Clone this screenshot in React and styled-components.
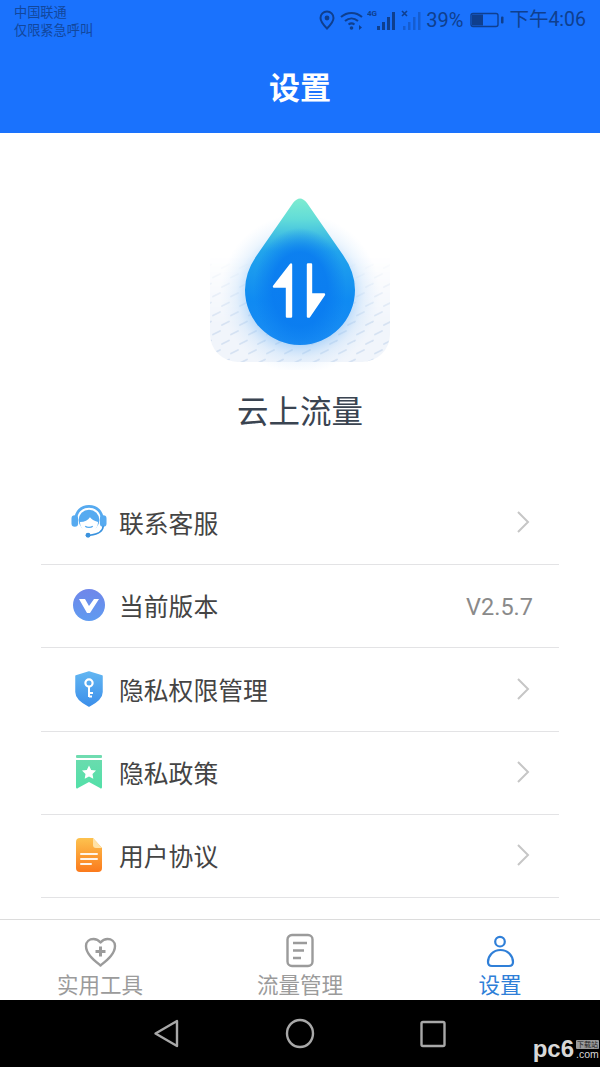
import React from 'react';
import styled, { createGlobalStyle } from 'styled-components';

const CJK = `"Noto Sans CJK SC", "Noto Sans", sans-serif`;

const Global = createGlobalStyle`
  html, body { margin: 0; padding: 0; background: #fff; }
  * { box-sizing: border-box; }
`;

const Page = styled.div`
  width: 600px;
  height: 1067px;
  display: flex;
  flex-direction: column;
  overflow: hidden;
  font-family: ${CJK};
  background: #fff;
`;

/* 상단 헤더 */
const Header = styled.header`
  height: 133px;
  flex: none;
  background: #1a72fd;
  display: flex;
  flex-direction: column;
`;
const StatusBar = styled.div`
  height: 43px;
  padding: 3px 14px 0;
  display: flex;
  justify-content: space-between;
  color: #0f3f8e;
`;
const Carrier = styled.div`
  font-size: 13.2px;
  line-height: 18px;
  color: #12479c;
`;
const StatusRight = styled.div`
  display: flex;
  align-items: center;
  height: 34px;
`;
const StatusText = styled.span`
  font-family: Roboto, sans-serif;
  font-size: ${p => p.$size || 20}px;
  line-height: 34px;
  margin-left: ${p => p.$left || 0}px;
  color: #0f3f8e;
`;
const TimeText = styled(StatusText)`
  font-family: Roboto, ${CJK};
`;
const Title = styled.h1`
  margin: 0;
  height: 90px;
  text-align: center;
  font-size: 31px;
  line-height: 86px;
  font-weight: 700;
  color: #fff;
`;

/* 로고 영역 */
const Main = styled.main`
  flex: 1;
  display: flex;
  flex-direction: column;
  align-items: center;
`;
const Brand = styled.section`
  height: 348.8px;
  flex: none;
  width: 100%;
  padding-top: 47px;
  display: flex;
  flex-direction: column;
  align-items: center;
`;
const LogoSvg = styled.svg`
  width: 220px;
  height: 190px;
  display: block;
`;
const BrandName = styled.div`
  margin-top: 16px;
  font-size: 31.5px;
  line-height: 46px;
  color: #3a4451;
`;

const List = styled.ul`
  list-style: none;
  margin: 0;
  padding: 0;
  width: 518px;
`;
const Row = styled.li`
  height: 83.3px;
  padding: 0 26px 2px 30px;
  display: flex;
  align-items: center;
  border-bottom: 1px solid #e3e3e5;
`;
const RowIcon = styled.svg`
  width: 36px;
  height: 36px;
  flex: none;
  margin-right: 12px;
`;
const RowLabel = styled.span`
  flex: 1;
  font-size: 24.8px;
  color: #444;
`;
const Version = styled.span`
  font-family: Roboto, sans-serif;
  font-size: 23.5px;
  line-height: 28px;
  padding-top: 3px;
  color: #8a8a8a;
`;
const Chevron = styled.svg`
  width: 14px;
  height: 24px;
  margin-right: 3px;
`;

/* 하단 탭 */
const TabBar = styled.nav`
  height: 81px;
  flex: none;
  border-top: 1px solid #dcdcdc;
  display: grid;
  grid-template-columns: repeat(3, 1fr);
  background: #fff;
`;
const Tab = styled.div`
  display: flex;
  flex-direction: column;
  align-items: center;
  padding-top: 13px;
  color: ${p => (p.$active ? '#2f7fd8' : '#9b9b9b')};
`;
const TabIcon = styled.svg`
  width: 36px;
  height: 36px;
  display: block;
`;
const TabLabel = styled.span`
  font-size: 21.5px;
  line-height: 28px;
  margin-top: 1px;
`;

const NavBar = styled.div`
  position: relative;
  height: 67px;
  flex: none;
  background: #000;
`;
const NavIcons = styled.svg`
  width: 600px;
  height: 67px;
  display: block;
`;
const Watermark = styled.div`
  position: absolute;
  right: 1px;
  bottom: 7px;
  display: flex;
  align-items: flex-end;
  color: #d8d8d8;
`;
const WmLogo = styled.span`
  font-family: "Liberation Sans", sans-serif;
  font-weight: 700;
  font-size: 24px;
  line-height: 22px;
`;
const WmSide = styled.div`
  display: flex;
  flex-direction: column;
  align-items: center;
  margin-left: 2px;
`;
const WmTag = styled.span`
  background: #9a9a9a;
  color: #222;
  font-size: 7px;
  line-height: 9px;
  padding: 0 1px;
  border-radius: 1px;
`;
const WmCom = styled.span`
  font-family: "Liberation Sans", sans-serif;
  font-size: 10.5px;
  line-height: 11px;
`;

function Logo() {
  const dashes = [];
  for (let r = 0; r < 11; r++) {
    for (let c = 0; c < 11; c++) {
      dashes.push(
        <line key={`${r}-${c}`} x1={204 + c * 18 + (r % 2) * 9} y1={268 + r * 9.5} x2={211 + c * 18 + (r % 2) * 9} y2={264.5 + r * 9.5} />
      );
    }
  }
  return (
    <LogoSvg viewBox="190 180 220 190">
      <defs>
        <linearGradient id="fade" x1="0" y1="0" x2="0" y2="1">
          <stop offset="0" stopColor="#fff" stopOpacity="0" />
          <stop offset="0.65" stopColor="#fff" />
        </linearGradient>
        <mask id="plateMask">
          <rect x="210" y="255" width="180" height="107" fill="url(#fade)" />
        </mask>
        <clipPath id="plateClip">
          <path d="M210 250H390V334A28 28 0 0 1 362 362H238A28 28 0 0 1 210 334Z" />
        </clipPath>
        <radialGradient id="glow" cx="0.5" cy="0.5" r="0.5">
          <stop offset="0.6" stopColor="#62aef6" stopOpacity="0.5" />
          <stop offset="0.8" stopColor="#a5d0f9" stopOpacity="0.22" />
          <stop offset="1" stopColor="#c5e0fb" stopOpacity="0" />
        </radialGradient>
        <linearGradient id="drop" x1="0" y1="0" x2="0" y2="1">
          <stop offset="0" stopColor="#7eecd0" />
          <stop offset="0.14" stopColor="#62dcd8" />
          <stop offset="0.36" stopColor="#22a4ec" />
          <stop offset="0.7" stopColor="#0f8af2" />
          <stop offset="1" stopColor="#1a8cf3" />
        </linearGradient>
        <radialGradient id="dropInner" cx="0.5" cy="0.62" r="0.42">
          <stop offset="0.6" stopColor="#0a7cf0" stopOpacity="0.9" />
          <stop offset="1" stopColor="#0a7cf0" stopOpacity="0" />
        </radialGradient>
      </defs>
      <g clipPath="url(#plateClip)" mask="url(#plateMask)">
        <rect x="210" y="255" width="180" height="107" fill="#f1f5fb" />
        <g stroke="#d6e2f2" strokeWidth="1.8" strokeLinecap="round">{dashes}</g>
      </g>
      <circle cx="300" cy="294" r="80" fill="url(#glow)" />
      <path d="M293 203Q300 194 307 203L343 255Q355 272 355 290A55 55 0 0 1 245 290Q245 272 257 255Z" fill="url(#drop)" />
      <path d="M293 203Q300 194 307 203L343 255Q355 272 355 290A55 55 0 0 1 245 290Q245 272 257 255Z" fill="url(#dropInner)" />
      <g fill="#fff" stroke="#fff" strokeWidth="2.4" strokeLinejoin="round">
        <path d="M291 264.5V316.5H287V286.5H274Z" />
        <path d="M308 264.5H311V294.5H324L309 316.5H308Z" />
      </g>
    </LogoSvg>
  );
}

const HeadsetIcon = () => (
  <RowIcon viewBox="0 0 38 38">
    <path d="M5 17C5 8 11 2.5 19 2.5S33 8 33 17" fill="none" stroke="#56aaf0" strokeWidth="3" />
    <circle cx="19" cy="17" r="11" fill="#56aaf0" />
    <path d="M9.5 19c5 0 8.5-2 10.5-5 2 2 4 4 8.5 5 0 6-4 10-9.500 10s-9.500-4-9.500-10Z" fill="#fff" />
    <path d="M15 23.5c2 1.5 6 1.5 8 0" fill="none" stroke="#56aaf0" strokeWidth="1.4" />
    <rect x="0.5" y="12" width="7" height="12" rx="3.5" fill="#56aaf0" />
    <rect x="30.5" y="12" width="7" height="12" rx="3.5" fill="#56aaf0" />
    <path d="M34 23c0 6-6 9-14 10" fill="none" stroke="#3a92de" strokeWidth="1.6" />
    <circle cx="18" cy="33" r="2.6" fill="#3a92de" />
  </RowIcon>
);
const VersionIcon = () => (
  <RowIcon viewBox="0 0 36 36">
    <defs>
      <linearGradient id="vGrad" x1="0" y1="0" x2="0" y2="1">
        <stop offset="0" stopColor="#6f86ea" />
        <stop offset="1" stopColor="#5f9bf0" />
      </linearGradient>
    </defs>
    <circle cx="18" cy="18" r="16" fill="url(#vGrad)" />
    <path d="M8 12h6l4 7 5-7h5l-9 14h-3Z" fill="#fff" />
  </RowIcon>
);
const ShieldIcon = () => (
  <RowIcon viewBox="0 0 36 36">
    <defs>
      <linearGradient id="shGrad" x1="0" y1="0" x2="0" y2="1">
        <stop offset="0" stopColor="#62b6f2" />
        <stop offset="1" stopColor="#3c8fea" />
      </linearGradient>
    </defs>
    <path d="M18 1L31 5V21C31 27 24 32 18 35C12 32 5 27 5 21V5Z" fill="url(#shGrad)" stroke="url(#shGrad)" strokeWidth="1.5" strokeLinejoin="round" />
    <circle cx="18" cy="12" r="3.6" fill="none" stroke="#fff" strokeWidth="2.2" />
    <path d="M18 16V26M18 22h4M18 25.5h3" fill="none" stroke="#fff" strokeWidth="2" />
  </RowIcon>
);
const BookmarkIcon = () => (
  <RowIcon viewBox="0 0 36 36">
    <defs>
      <linearGradient id="bmGrad" x1="0" y1="0" x2="0" y2="1">
        <stop offset="0" stopColor="#69dcae" />
        <stop offset="1" stopColor="#52e0a8" />
      </linearGradient>
    </defs>
    <rect x="5" y="1" width="26" height="3" rx="1" fill="#6fdcb0" />
    <path d="M5 6H31V33C31 34.5 30 35 29 34L18 28 7 34C6 35 5 34.5 5 33Z" fill="url(#bmGrad)" />
    <path d="M18 11.5l2.2 4.4 4.8.7-3.5 3.4.8 4.8-4.3-2.3-4.3 2.3.8-4.8-3.5-3.4 4.8-.7Z" fill="#fff" />
  </RowIcon>
);
const DocIcon = () => (
  <RowIcon viewBox="0 0 36 36">
    <defs>
      <linearGradient id="docGrad" x1="0" y1="0" x2="0" y2="1">
        <stop offset="0" stopColor="#fdc24e" />
        <stop offset="1" stopColor="#fb7a1c" />
      </linearGradient>
    </defs>
    <path d="M9 1H22L31 11V31A4 4 0 0 1 27 35H9A4 4 0 0 1 5 31V5A4 4 0 0 1 9 1Z" fill="url(#docGrad)" />
    <path d="M22 1L31 11H25A3 3 0 0 1 22 8Z" fill="#ffe2a6" />
    <path d="M10 17H26M10 22H26M10 27H20" stroke="#fff" strokeWidth="2" strokeLinecap="round" opacity="0.9" />
  </RowIcon>
);

const Arrow = () => (
  <Chevron viewBox="0 0 14 24">
    <path d="M2 2L12 12 2 22" fill="none" stroke="#c6c6c6" strokeWidth="2" />
  </Chevron>
);

const rows = [
  { label: '联系客服', icon: <HeadsetIcon /> },
  { label: '当前版本', icon: <VersionIcon />, version: 'V2.5.7' },
  { label: '隐私权限管理', icon: <ShieldIcon /> },
  { label: '隐私政策', icon: <BookmarkIcon /> },
  { label: '用户协议', icon: <DocIcon /> },
];

export default function App() {
  return (
    <Page>
      <Global />
      <Header>
        <StatusBar>
          <Carrier>
            中国联通
            <br />
            仅限紧急呼叫
          </Carrier>
          <StatusRight>
            <svg width="16" height="20" viewBox="0 0 16 20">
              <path d="M8 1.5C4.3 1.5 1.5 4.3 1.5 8c0 4 4 8 6.500 10.500C10.500 16 14.500 12 14.500 8c0-3.700-2.800-6.500-6.500-6.500Z" fill="none" stroke="#0f3f8e" strokeWidth="2" />
              <circle cx="8" cy="8" r="2.4" fill="#0f3f8e" />
            </svg>
            <svg width="24" height="20" viewBox="0 0 24 20" style={{ marginLeft: 5 }}>
              <g fill="none" stroke="#0f3f8e" strokeWidth="2">
                <path d="M1 7c6-5.500 15-5.500 21 0" />
                <path d="M5 11c4-3.500 9-3.500 13 0" />
                <path d="M8.5 14.5c2-1.500 4-1.500 6 0" />
              </g>
              <circle cx="11.5" cy="18" r="1.8" fill="#0f3f8e" />
              <path d="M19 15l3 2.5-3 2.5Z" fill="#0f3f8e" />
            </svg>
            <svg width="30" height="22" viewBox="0 0 30 22" style={{ marginLeft: 3 }}>
              <text x="0" y="7" fontFamily="Roboto, sans-serif" fontSize="8" fontWeight="700" fill="#0f3f8e">4G</text>
              <g fill="#0f3f8e">
                <rect x="10" y="17" width="3" height="4" />
                <rect x="15" y="13" width="3" height="8" />
                <rect x="20" y="8" width="3" height="13" />
                <rect x="25" y="3" width="3" height="18" />
              </g>
            </svg>
            <svg width="22" height="22" viewBox="0 0 22 22" style={{ marginLeft: 4 }}>
              <path d="M1 2l5 5M6 2L1 7" stroke="#0f3f8e" strokeWidth="1.6" />
              <g fill="#0f3f8e" opacity="0.4">
                <rect x="2" y="17" width="2.5" height="4" />
                <rect x="7" y="13" width="2.5" height="8" />
                <rect x="12" y="8" width="2.5" height="13" />
                <rect x="17" y="3" width="2.5" height="18" />
              </g>
            </svg>
            <StatusText $left={3}>39%</StatusText>
            <svg width="34" height="18" viewBox="0 0 34 18" style={{ marginLeft: 7 }}>
              <rect x="1" y="2.5" width="27" height="13" rx="2" fill="none" stroke="#0f3f8e" strokeWidth="1.4" />
              <rect x="2" y="3.5" width="11" height="11" fill="#0f3f8e" />
              <rect x="31" y="5.5" width="2.5" height="7" rx="1" fill="#0f3f8e" />
            </svg>
            <TimeText $left={5} $size={19.5}>下午4:06</TimeText>
          </StatusRight>
        </StatusBar>
        <Title>设置</Title>
      </Header>

      <Main>
        <Brand>
          <Logo />
          <BrandName>云上流量</BrandName>
        </Brand>
        <List>
          {rows.map(r => (
            <Row key={r.label}>
              {r.icon}
              <RowLabel>{r.label}</RowLabel>
              {r.version ? <Version>{r.version}</Version> : <Arrow />}
            </Row>
          ))}
        </List>
      </Main>

      <TabBar>
        <Tab>
          <TabIcon viewBox="0 0 36 36">
            <path d="M18.5 32.5C12 27 4 21 4 13 4 8.5 7.5 6 11.5 6c3 0 5.3 1.5 7 3.5 1.7-2 4-3.5 7-3.5 4 0 7.5 2.5 7.5 7 0 8-8 14-14.500 19.500Z" fill="none" stroke="currentColor" strokeWidth="2.4" strokeLinejoin="round" />
            <path d="M18.5 13.5v10M13.5 18.5h10" stroke="currentColor" strokeWidth="3" />
          </TabIcon>
          <TabLabel>实用工具</TabLabel>
        </Tab>
        <Tab>
          <TabIcon viewBox="0 0 36 36">
            <rect x="5.5" y="2" width="25" height="31" rx="4.5" fill="none" stroke="currentColor" strokeWidth="2.4" />
            <path d="M11 10h14M11 17.5h11M11 25h8" stroke="currentColor" strokeWidth="2.4" />
          </TabIcon>
          <TabLabel>流量管理</TabLabel>
        </Tab>
        <Tab $active>
          <TabIcon viewBox="0 0 36 36">
            <circle cx="18" cy="8.7" r="4.8" fill="none" stroke="currentColor" strokeWidth="2.2" />
            <path d="M18.5 17C11 17 6 23 6 29c0 3 1 4 4 4h17c3 0 4-1 4-4 0-6-5-12-12.500-12Z" fill="none" stroke="currentColor" strokeWidth="2.2" />
          </TabIcon>
          <TabLabel>设置</TabLabel>
        </Tab>
      </TabBar>

      <NavBar>
        <NavIcons viewBox="0 0 600 67">
          <g fill="none" stroke="#a8a8a8" strokeWidth="2.4" strokeLinejoin="round">
            <path d="M177 21V46L155.5 33.5Z" />
            <ellipse cx="300" cy="33.5" rx="13" ry="13.5" />
            <rect x="421.5" y="22" width="23" height="24" rx="1.5" />
          </g>
        </NavIcons>
        <Watermark>
          <WmLogo>pc6</WmLogo>
          <WmSide>
            <WmTag>下载站</WmTag>
            <WmCom>.com</WmCom>
          </WmSide>
        </Watermark>
      </NavBar>
    </Page>
  );
}
